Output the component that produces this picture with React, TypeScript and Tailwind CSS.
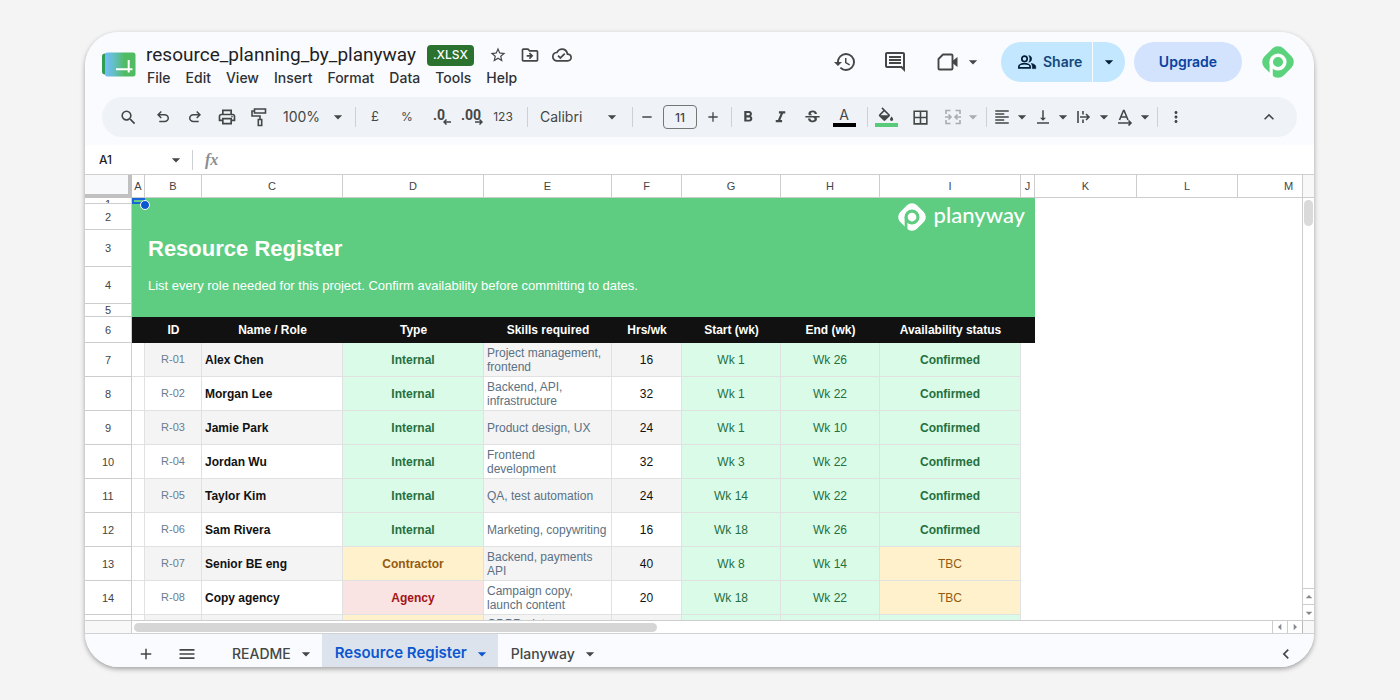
import type { ReactNode } from 'react'
import { clsx } from 'clsx'
import {
  MdAdd,
  MdArrowDropDown,
  MdArrowDropUp,
  MdArrowLeft,
  MdArrowRight,
  MdBorderAll,
  MdChevronLeft,
  MdExpandLess,
  MdFormatAlignLeft,
  MdFormatBold,
  MdFormatItalic,
  MdHistory,
  MdMenu,
  MdMoreVert,
  MdOutlineCloudDone,
  MdOutlineDriveFileMove,
  MdOutlineInsertComment,
  MdOutlinePrint,
  MdRemove,
  MdSearch,
  MdStarBorder,
  MdStrikethroughS,
  MdVerticalAlignBottom,
} from 'react-icons/md'

const menus = ['File', 'Edit', 'View', 'Insert', 'Format', 'Data', 'Tools', 'Help']

const columns = [
  { name: 'A', width: 'w-[13px]' },
  { name: 'B', width: 'w-[57px]' },
  { name: 'C', width: 'w-[141px]' },
  { name: 'D', width: 'w-[141px]' },
  { name: 'E', width: 'w-[128px]' },
  { name: 'F', width: 'w-[70px]' },
  { name: 'G', width: 'w-[99px]' },
  { name: 'H', width: 'w-[99px]' },
  { name: 'I', width: 'w-[141px]' },
  { name: 'J', width: 'w-[14px]' },
  { name: 'K', width: 'w-[102px]' },
  { name: 'L', width: 'w-[101px]' },
  { name: 'M', width: 'w-[102px]' },
]

const headings = ['ID', 'Name / Role', 'Type', 'Skills required', 'Hrs/wk', 'Start (wk)', 'End (wk)', 'Availability status']

type Resource = {
  id: string
  name: string
  type: 'Internal' | 'Contractor' | 'Agency'
  skills: string
  hours: number
  start: string
  end: string
  status: 'Confirmed' | 'TBC'
}

const resources: Resource[] = [
  { id: 'R-01', name: 'Alex Chen', type: 'Internal', skills: 'Project management, frontend', hours: 16, start: 'Wk 1', end: 'Wk 26', status: 'Confirmed' },
  { id: 'R-02', name: 'Morgan Lee', type: 'Internal', skills: 'Backend, API, infrastructure', hours: 32, start: 'Wk 1', end: 'Wk 22', status: 'Confirmed' },
  { id: 'R-03', name: 'Jamie Park', type: 'Internal', skills: 'Product design, UX', hours: 24, start: 'Wk 1', end: 'Wk 10', status: 'Confirmed' },
  { id: 'R-04', name: 'Jordan Wu', type: 'Internal', skills: 'Frontend\ndevelopment', hours: 32, start: 'Wk 3', end: 'Wk 22', status: 'Confirmed' },
  { id: 'R-05', name: 'Taylor Kim', type: 'Internal', skills: 'QA, test automation', hours: 24, start: 'Wk 14', end: 'Wk 22', status: 'Confirmed' },
  { id: 'R-06', name: 'Sam Rivera', type: 'Internal', skills: 'Marketing, copywriting', hours: 16, start: 'Wk 18', end: 'Wk 26', status: 'Confirmed' },
  { id: 'R-07', name: 'Senior BE eng', type: 'Contractor', skills: 'Backend, payments API', hours: 40, start: 'Wk 8', end: 'Wk 14', status: 'TBC' },
  { id: 'R-08', name: 'Copy agency', type: 'Agency', skills: 'Campaign copy, launch content', hours: 20, start: 'Wk 18', end: 'Wk 22', status: 'TBC' },
]

const typeStyles = {
  Internal: 'bg-[#dafbe8] text-[#24703f]',
  Contractor: 'bg-[#fff1cc] text-[#945a10]',
  Agency: 'bg-[#fae3e3] text-[#a31515]',
}

const statusStyles = {
  Confirmed: 'bg-[#dafbe8] font-bold text-[#24703f]',
  TBC: 'bg-[#fff1cc] text-[#945a10]',
}

function SheetLogo() {
  return (
    <svg viewBox="0 0 34 25" className="mt-5 h-[25px] w-[34px] shrink-0" aria-hidden="true">
      <defs>
        <linearGradient id="sheet" x1="0" x2="1" y1="0" y2="0">
          <stop offset="0" stopColor="#74bdfb" />
          <stop offset="0.3" stopColor="#62bfc4" />
          <stop offset="0.65" stopColor="#50bb62" />
        </linearGradient>
      </defs>
      <rect x="0" y="1.5" width="12" height="21" rx="3" fill="#2f9e52" />
      <rect x="3" y="0.5" width="30.500" height="24" rx="2.500" fill="url(#sheet)" />
      <path d="M14 17.200h16.500M26.700 8v12.500" stroke="#fff" strokeWidth="2" fill="none" />
    </svg>
  )
}

function PlanywayMark({ className, diamond, letter }: { className: string; diamond: string; letter: string }) {
  return (
    <svg viewBox="0 0 32 32" className={className} aria-hidden="true">
      <rect x="2.500" y="2.500" width="27" height="27" rx="8" transform="rotate(45 16 16)" className={diamond} />
      <circle cx="16" cy="16" r="6.800" fill="none" strokeWidth="3.600" className={letter} />
      <path d="M9.200 16v15" fill="none" strokeWidth="3.200" className={letter} />
    </svg>
  )
}

function UndoIcon({ flip }: { flip?: boolean }) {
  return (
    <svg viewBox="0 -960 960 960" fill="currentColor" className={clsx('size-[18px]', flip && '-scale-x-100')}>
      <path d="M280-200v-80h284q63 0 109.500-40T720-420q0-60-46.500-100T564-560H312l104 104-56 56-200-200 200-200 56 56-104 104h252q97 0 166.500 63T800-420q0 94-69.500 157T564-200H280Z" />
    </svg>
  )
}

function PaintRollerIcon() {
  return (
    <svg viewBox="0 0 18 20" fill="none" stroke="currentColor" strokeWidth="1.600" className="h-5 w-[18px]">
      <path d="M4.500 2h11v4h-11zM4.500 4H2v5h8v3.500M8.300 12.500h3.400v6H8.300z" />
    </svg>
  )
}

function FillIcon() {
  return (
    <svg viewBox="2 0 20 18" fill="currentColor" fillRule="evenodd" className="h-[15px] w-4">
      <path d="M16.560 8.940 7.620 0 6.210 1.410l2.380 2.380-5.150 5.150a1.490 1.490 0 0 0 0 2.120l5.500 5.500c.29.29.68.44 1.060.44s.77-.15 1.060-.44l5.500-5.500c.59-.58.59-1.530 0-2.120zM5.210 10 10 5.210 14.790 10zM19 11.500s-2 2.170-2 3.500a2 2 0 0 0 4 0c0-1.330-2-3.500-2-3.500z" />
    </svg>
  )
}

function MeetIcon() {
  return (
    <svg viewBox="2 1 22 22" className="size-[22px]">
      <path d="M8 4.500h8.500a1 1 0 0 1 1 1v13a1 1 0 0 1-1 1h-12a1 1 0 0 1-1-1V9z" fill="none" stroke="currentColor" strokeWidth="1.900" strokeLinejoin="round" />
      <path d="M18 10.500 22.500 7v10L18 13.500z" fill="currentColor" />
    </svg>
  )
}

function PeopleIcon() {
  return (
    <svg viewBox="0 0 20 16" fill="none" stroke="currentColor" strokeWidth="1.700" className="h-4 w-5">
      <circle cx="7.500" cy="4.800" r="2.700" />
      <path d="M1.900 13.800v-1.300c0-1.700 3-2.800 5.600-2.800s5.600 1.100 5.600 2.800v1.300z" />
      <path d="M11.800 1.500a3.400 3.400 0 0 1 0 6.700c1.500-1.600 1.500-5 0-6.700z" fill="currentColor" strokeWidth="0.600" />
      <path d="M14.300 9.400c2.700.5 4.400 1.600 4.400 3.200v2h-3.300v-2c0-1.300-.4-2.300-1.100-3.200z" fill="currentColor" strokeWidth="0.600" />
    </svg>
  )
}

function MergeIcon() {
  return (
    <svg viewBox="0 0 18 18" fill="none" stroke="currentColor" strokeWidth="1.600" className="size-[18px]">
      <path d="M6.500 2.500H2V6M11.500 2.500H16V6M6.500 15.500H2V12M11.500 15.500H16V12M1 9h5.500M4.500 6.500 7 9l-2.500 2.500M17 9h-5.500M13.500 6.500 11 9l2.500 2.500" />
    </svg>
  )
}

function OverflowIcon() {
  return (
    <svg viewBox="0 0 18 18" fill="none" stroke="currentColor" strokeWidth="1.600" className="size-[18px]">
      <path d="M3 3v12M8 3v3.500M8 11.500V15M5 9h9M11 6l3 3-3 3" />
    </svg>
  )
}

function RotateIcon() {
  return (
    <svg viewBox="0 0 18 18" fill="none" stroke="currentColor" strokeWidth="1.600" className="size-[18px]">
      <path d="M3.500 12 7.500 2.500h.6L12 12M5 9h5.600M2 15h12M12.500 12.500 15 15l-2.500 2.500" />
    </svg>
  )
}

function DecimalArrow({ flip }: { flip?: boolean }) {
  return (
    <svg
      viewBox="0 0 8 6"
      fill="none"
      stroke="currentColor"
      strokeWidth="1.500"
      className={clsx('absolute right-1 bottom-2 h-1.5 w-2', flip && '-scale-x-100')}
    >
      <path d="M0 3h7M4.500.5 7 3 4.500 5.500" />
    </svg>
  )
}

function ToolButton({ label, className, children }: { label: string; className?: string; children: ReactNode }) {
  return (
    <button type="button" aria-label={label} className={clsx('relative flex h-8 shrink-0 items-center justify-center', className ?? 'w-8')}>
      {children}
    </button>
  )
}

function MenuToolButton({ label, className, children }: { label: string; className?: string; children: ReactNode }) {
  return (
    <button type="button" aria-label={label} className={clsx('flex h-8 shrink-0 items-center gap-[3px]', className)}>
      {children}
      <MdArrowDropDown className="size-4 scale-125" />
    </button>
  )
}

function ToolSelect({ label, value, className }: { label: string; value: string; className: string }) {
  return (
    <label className="relative flex shrink-0 items-center">
      <select aria-label={label} className={clsx('h-8 appearance-none bg-transparent text-sm', className)}>
        <option>{value}</option>
      </select>
      <MdArrowDropDown className="pointer-events-none absolute right-0 size-4 scale-125" />
    </label>
  )
}

function Separator({ className }: { className?: string }) {
  return <div className={clsx('h-5 w-px shrink-0 bg-[#cdd1d6]', className)} />
}

function TopBar() {
  return (
    <div className="flex h-[65px] items-start pr-5 pl-[17px]">
      <SheetLogo />
      <div className="ml-2.5 shrink-0 pt-2.5">
        <div className="flex h-[26px] items-center">
          <h1 className="font-[Roboto,sans-serif] text-[19px] leading-6 text-[#1f1f1f]">resource_planning_by_planyway</h1>
          <span className="ml-[11px] flex h-[21px] items-center rounded bg-[#2b722e] px-1.5 text-xs font-medium text-white">.XLSX</span>
          <button type="button" aria-label="Star" className="ml-2 flex w-8 justify-center">
            <MdStarBorder className="size-[18px]" />
          </button>
          <button type="button" aria-label="Move" className="flex w-8 justify-center">
            <MdOutlineDriveFileMove className="size-5" />
          </button>
          <button type="button" aria-label="Saved to Drive" className="flex w-8 justify-center">
            <MdOutlineCloudDone className="size-5" />
          </button>
        </div>
        <nav className="flex gap-[15px] pl-px text-sm leading-5 font-medium text-[#303134]">
          {menus.map((menu) => (
            <button key={menu} type="button">
              {menu}
            </button>
          ))}
        </nav>
      </div>

      <div className="mt-2.5 ml-auto flex h-10 shrink-0 items-center">
        <button type="button" aria-label="Version history" className="flex w-[50px] justify-center">
          <MdHistory className="size-6" />
        </button>
        <button type="button" aria-label="Comments" className="flex w-[50px] justify-center">
          <MdOutlineInsertComment className="size-6" />
        </button>
        <button type="button" aria-label="Join a call" className="ml-[17px] flex items-center gap-1.5">
          <MeetIcon />
          <MdArrowDropDown className="size-4 scale-125" />
        </button>
        <div className="ml-5 flex h-10 gap-px overflow-hidden rounded-full text-sm font-semibold text-[#14487c]">
          <button type="button" className="flex w-[91px] items-center gap-1.5 bg-[#c2e7ff] pl-4">
            <span className="text-[#001d35]">
              <PeopleIcon />
            </span>
            Share
          </button>
          <button type="button" aria-label="Share options" className="flex w-8 items-center justify-center bg-[#c2e7ff] text-[#001d35]">
            <MdArrowDropDown className="size-4 scale-125" />
          </button>
        </div>
        <button type="button" className="ml-[9px] h-10 w-[108px] rounded-full bg-[#d3e3fd] text-sm font-semibold text-[#0842a0]">
          Upgrade
        </button>
        <a href="#account" aria-label="Account" className="ml-5">
          <PlanywayMark className="size-8" diamond="fill-[#5bd27c]" letter="stroke-white" />
        </a>
      </div>
    </div>
  )
}

function Toolbar() {
  return (
    <div className="mx-[17px] mb-2 flex h-10 items-center overflow-hidden rounded-full bg-[#eff3f8] pr-3 pl-2.5">
      <ToolButton label="Search" className="mr-[3px] w-8"><MdSearch className="size-[19px]" /></ToolButton>
      <ToolButton label="Undo"><UndoIcon /></ToolButton>
      <ToolButton label="Redo"><UndoIcon flip /></ToolButton>
      <ToolButton label="Print"><MdOutlinePrint className="size-5" /></ToolButton>
      <ToolButton label="Paint format"><PaintRollerIcon /></ToolButton>
      <ToolSelect label="Zoom" value="100%" className="w-[71px] pl-2" />
      <Separator className="mr-[3px] ml-[9px]" />
      <ToolButton label="Currency"><span className="text-[13px]">£</span></ToolButton>
      <ToolButton label="Percent"><span className="text-xs">%</span></ToolButton>
      <ToolButton label="Decrease decimal places">
        <span className="pb-1 font-[Roboto,sans-serif] text-sm font-bold">.0</span>
        <DecimalArrow flip />
      </ToolButton>
      <ToolButton label="Increase decimal places">
        <span className="pb-1 font-[Roboto,sans-serif] text-sm font-bold">.00</span>
        <DecimalArrow />
      </ToolButton>
      <ToolButton label="More formats"><span className="text-xs">123</span></ToolButton>
      <Separator className="ml-2" />
      <ToolSelect label="Font" value="Calibri" className="w-[92px] pl-3" />
      <Separator className="ml-3" />
      <ToolButton label="Decrease font size" className="w-7"><MdRemove className="size-4" /></ToolButton>
      <input
        aria-label="Font size"
        defaultValue="11"
        className="mx-0.5 h-6 w-[34px] shrink-0 rounded border border-[#747775] text-center text-xs font-medium"
      />
      <ToolButton label="Increase font size" className="w-7"><MdAdd className="size-4" /></ToolButton>
      <Separator className="ml-1" />
      <ToolButton label="Bold"><MdFormatBold className="size-[18px]" /></ToolButton>
      <ToolButton label="Italic"><MdFormatItalic className="size-[19px]" /></ToolButton>
      <ToolButton label="Strikethrough"><MdStrikethroughS className="size-[19px]" /></ToolButton>
      <ToolButton label="Text colour">
        <span className="flex w-[23px] flex-col items-center border-b-4 border-black text-sm leading-4">A</span>
      </ToolButton>
      <Separator className="ml-[7px]" />
      <ToolButton label="Fill colour" className="w-9">
        <span className="flex w-[23px] justify-center border-b-4 border-[#57cb79] pb-px">
          <FillIcon />
        </span>
      </ToolButton>
      <ToolButton label="Borders"><MdBorderAll className="size-[19px]" /></ToolButton>
      <MenuToolButton label="Merge cells" className="ml-2 text-[#a9acb0]"><MergeIcon /></MenuToolButton>
      <Separator className="ml-[5px]" />
      <div className="mr-1 ml-1.5 flex shrink-0 gap-1">
        <MenuToolButton label="Horizontal align"><MdFormatAlignLeft className="size-[18px]" /></MenuToolButton>
        <MenuToolButton label="Vertical align"><MdVerticalAlignBottom className="size-[18px]" /></MenuToolButton>
        <MenuToolButton label="Text wrapping"><OverflowIcon /></MenuToolButton>
        <MenuToolButton label="Text rotation"><RotateIcon /></MenuToolButton>
      </div>
      <Separator />
      <ToolButton label="More" className="w-9"><MdMoreVert className="size-[18px]" /></ToolButton>
      <ToolButton label="Hide the menus" className="ml-auto w-8"><MdExpandLess className="size-5" /></ToolButton>
    </div>
  )
}

function FormulaBar() {
  return (
    <div className="flex h-[30px] shrink-0 items-center border-b border-[#cfcfcf] bg-white pl-3.5">
      <input aria-label="Name box" defaultValue="A1" className="w-[69px] text-xs font-medium text-[#1f1f1f]" />
      <button type="button" aria-label="Named ranges">
        <MdArrowDropDown className="size-4 scale-125" />
      </button>
      <Separator className="ml-2" />
      <label htmlFor="formula" className="ml-3 font-['Liberation_Serif',serif] text-base font-bold text-[#8a8d91] italic">
        fx
      </label>
      <input id="formula" className="ml-3 h-full flex-1" />
    </div>
  )
}

function RowNumber({ row, className }: { row: number; className?: string }) {
  return (
    <th scope="row" className="border-r border-b border-[#cdcdcd] bg-white p-0 font-normal text-[#444]">
      <div className={clsx('overflow-hidden text-center text-[11px] leading-3', className)}>{row}</div>
    </th>
  )
}

function Banner() {
  return (
    <td colSpan={10} rowSpan={5} className="relative bg-[#5ecd81] p-0 align-top text-white">
      <div className="flex items-center justify-end gap-2 pt-[5px] pr-2.5">
        <PlanywayMark className="size-7" diamond="fill-white" letter="stroke-[#5ecd81]" />
        <span className="pb-1 font-[Lato,sans-serif] text-[22px] leading-6 font-medium">planyway</span>
      </div>
      <h2 className="mt-1 pl-4 text-[22px] leading-7 font-bold">Resource Register</h2>
      <p className="mt-[15px] pl-4 text-[13px] leading-4">
        List every role needed for this project. Confirm availability before committing to dates.
      </p>
      {/* selected cell A1 with its fill handle */}
      <div className="absolute top-0 left-0 h-1.5 w-[13px] border-2 border-[#1a66d9]" />
      <div className="absolute top-0.5 left-2 size-2.5 rounded-full border border-white bg-[#0b57d0]" />
    </td>
  )
}

function Grid() {
  const cell = 'border-r border-b border-[#e0e2e1] p-0'
  return (
    <table className="w-max table-fixed border-separate border-spacing-0 font-['Liberation_Sans',Arial,sans-serif] text-xs">
      <colgroup>
        <col className="w-[47px]" />
        {columns.map((column) => (
          <col key={column.name} className={column.width} />
        ))}
      </colgroup>
      <thead>
        <tr className="h-[23px]">
          <td className="border-r-4 border-b-4 border-[#c0c0c0] bg-[#f8f9fa] p-0" />
          {columns.map((column) => (
            <th key={column.name} scope="col" className="border-r border-b border-[#cdcdcd] bg-white p-0 text-[11px] font-normal text-[#444]">
              {column.name}
            </th>
          ))}
        </tr>
      </thead>
      <tbody>
        <tr className="h-[6px]">
          <RowNumber row={1} className="h-[5px]" />
          <Banner />
        </tr>
        <tr className="h-[26px]"><RowNumber row={2} /></tr>
        <tr className="h-[37px]"><RowNumber row={3} /></tr>
        <tr className="h-[37px]"><RowNumber row={4} /></tr>
        <tr className="h-[13px]"><RowNumber row={5} className="h-3" /></tr>
        <tr className="h-[26px]">
          <RowNumber row={6} />
          <td className="bg-[#111] p-0" />
          {headings.map((heading) => (
            <th key={heading} scope="col" className="bg-[#111] p-0 font-bold text-white">
              {heading}
            </th>
          ))}
          <td className="bg-[#111] p-0" />
        </tr>
        {resources.map((resource, i) => {
          const stripe = i % 2 === 0 ? 'bg-[#f4f4f4]' : 'bg-white'
          return (
            <tr key={resource.id} className="h-[34px] text-center">
              <RowNumber row={i + 7} />
              <td className={cell} />
              <td className={clsx(cell, stripe, 'text-[11px] text-[#6b7c90]')}>{resource.id}</td>
              <td className={clsx(cell, stripe, 'pl-[3px] text-left font-bold text-[#111]')}>{resource.name}</td>
              <td className={clsx(cell, typeStyles[resource.type], 'font-bold')}>{resource.type}</td>
              <td className={clsx(cell, stripe, 'pl-[3px] text-left leading-[14px] whitespace-pre-line text-[#5a7184]')}>{resource.skills}</td>
              <td className={clsx(cell, stripe, 'text-[#111]')}>{resource.hours}</td>
              <td className={clsx(cell, 'bg-[#dafbe8] text-[#24703f]')}>{resource.start}</td>
              <td className={clsx(cell, 'bg-[#dafbe8] text-[#24703f]')}>{resource.end}</td>
              <td className={clsx(cell, statusStyles[resource.status])}>{resource.status}</td>
            </tr>
          )
        })}
        <tr className="h-[34px] align-top">
          <th className="border-r border-[#cdcdcd] p-0" />
          <td className={cell} />
          <td className={clsx(cell, 'bg-[#f4f4f4]')} />
          <td className={clsx(cell, 'bg-[#f4f4f4]')} />
          <td className={clsx(cell, 'bg-[#fff1cc]')} />
          <td className={clsx(cell, 'bg-[#f4f4f4] pt-0.5 pl-[3px] leading-[14px] text-[#5a7184]')}>GDPR, data</td>
          <td className={clsx(cell, 'bg-[#f4f4f4]')} />
          <td className={clsx(cell, 'bg-[#dafbe8]')} />
          <td className={clsx(cell, 'bg-[#dafbe8]')} />
          <td className={clsx(cell, 'bg-[#dafbe8]')} />
        </tr>
      </tbody>
    </table>
  )
}

function VerticalScrollbar() {
  return (
    <div className="flex w-3 shrink-0 flex-col border-l border-[#cdcdcd] text-[#85888c]">
      <div className="h-[23px] border-b border-[#cdcdcd] bg-[#f8f8f8]" />
      <div className="mx-px mt-0.5 h-[26px] rounded-full bg-[#dadada]" />
      <button type="button" aria-label="Scroll up" className="mt-auto flex h-4 items-center justify-center border-t border-[#cdcdcd]">
        <MdArrowDropUp className="size-4 shrink-0" />
      </button>
      <button type="button" aria-label="Scroll down" className="flex h-4 items-center justify-center border-t border-[#cdcdcd]">
        <MdArrowDropDown className="size-4 shrink-0" />
      </button>
    </div>
  )
}

function HorizontalScrollbar() {
  return (
    <div className="flex h-[13px] shrink-0 border-t border-[#cdcdcd] text-[#85888c]">
      <div className="w-[47px] border-r border-[#cdcdcd] bg-[#f8f8f8]" />
      <div className="flex-1 px-0.5 pt-0.5">
        <div className="h-[9px] w-[46%] rounded-full bg-[#d6d6d6]" />
      </div>
      <button type="button" aria-label="Scroll left" className="flex w-[15px] items-center justify-center border-l border-[#cdcdcd]">
        <MdArrowLeft className="size-4 shrink-0" />
      </button>
      <button type="button" aria-label="Scroll right" className="flex w-[15px] items-center justify-center border-l border-[#cdcdcd]">
        <MdArrowRight className="size-4 shrink-0" />
      </button>
      <div className="w-3 border-l border-[#b8b8b8] bg-[#f8f8f8]" />
    </div>
  )
}

function SheetTab({ name, active }: { name: string; active?: boolean }) {
  return (
    <button
      type="button"
      className={clsx(
        'flex items-center gap-[7px] pt-1.5 pr-2 pl-[13px]',
        active ? 'bg-[#dde3ec] text-[15px] font-semibold text-[#0b57d0]' : 'text-sm font-medium text-[#444746]',
      )}
    >
      {name}
      <MdArrowDropDown className="size-4 scale-125" />
    </button>
  )
}

function SheetTabs() {
  return (
    <footer className="flex h-[34px] shrink-0 border-t border-[#cfd3d6] bg-[#f9fbff] pr-3 pl-[41px]">
      <button type="button" aria-label="Add sheet" className="flex w-10 items-center justify-center pt-1.5">
        <MdAdd className="size-[18px]" />
      </button>
      <button type="button" aria-label="All sheets" className="mr-3 flex w-[41px] items-center justify-center pt-1.5">
        <MdMenu className="size-5" />
      </button>
      <SheetTab name="README" />
      <SheetTab name="Resource Register" active />
      <SheetTab name="Planyway" />
      <button type="button" aria-label="Show side panel" className="ml-auto flex w-8 items-center justify-center pt-1.5">
        <MdChevronLeft className="size-5" />
      </button>
    </footer>
  )
}

export default function App() {
  return (
    <main className="flex h-screen flex-col bg-[#f4f4f4] pt-8 pr-[86px] pb-[33px] pl-[85px] font-[Inter,sans-serif] text-[#444746]">
      <div className="flex min-h-0 flex-1 flex-col overflow-hidden rounded-[34px] bg-white shadow-[0_2px_5px_rgba(0,0,0,0.35)]">
        <header className="shrink-0 bg-[#f9fbff]">
          <TopBar />
          <Toolbar />
        </header>
        <FormulaBar />
        <div className="flex min-h-0 flex-1">
          <div className="min-w-0 flex-1 overflow-hidden">
            <Grid />
          </div>
          <VerticalScrollbar />
        </div>
        <HorizontalScrollbar />
        <SheetTabs />
      </div>
    </main>
  )
}
